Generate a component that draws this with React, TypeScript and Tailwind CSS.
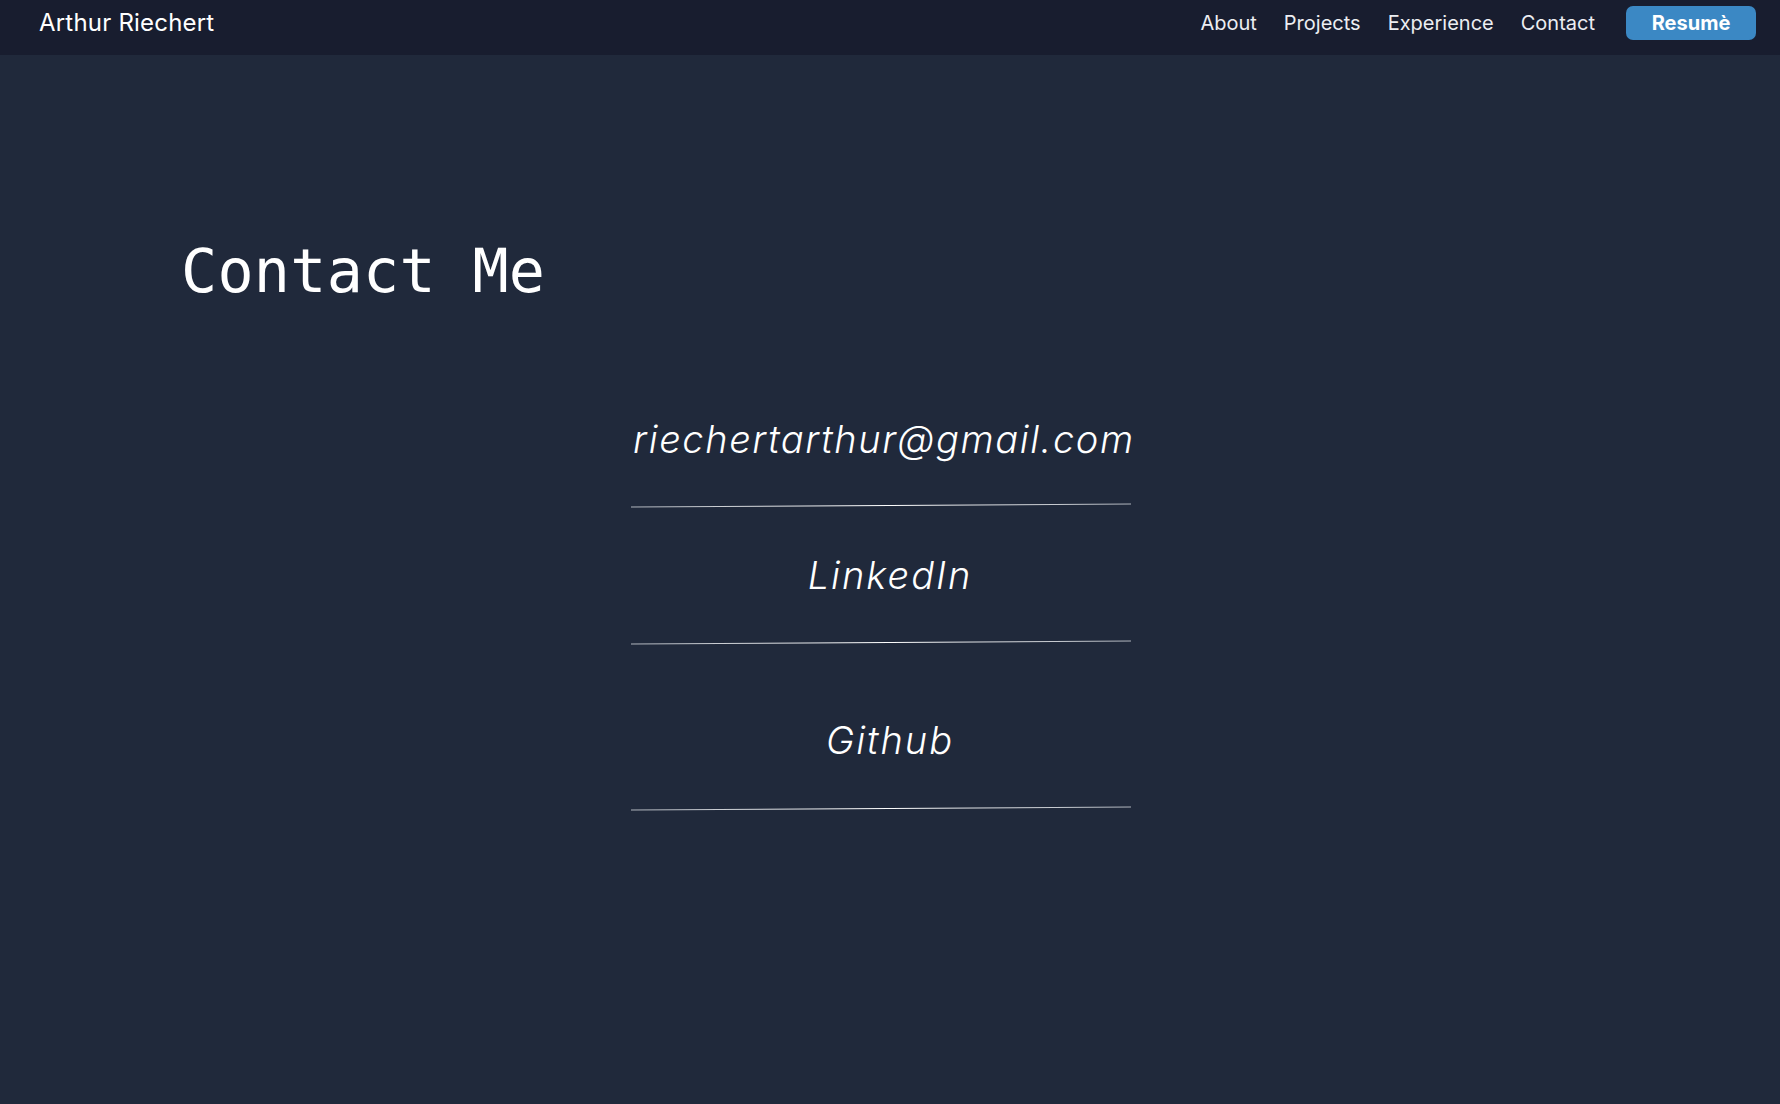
const navLinks = ["About", "Projects", "Experience", "Contact"];

const contacts = [
  { label: "riechertarthur@gmail.com", gap: "mt-0", line: "mt-[47px]", text: "pl-[2px] text-left tracking-[1.6px]" },
  { label: "LinkedIn", gap: "mt-[50px]", line: "mt-[48px]", text: "text-center tracking-[2px]" },
  { label: "Github", gap: "mt-[78px]", line: "mt-[49px]", text: "text-center tracking-[2px]" },
];

export default function App() {
  return (
    <div className="min-h-screen bg-[#20293b] font-['Inter',sans-serif] text-white">
      <header className="flex h-[55px] items-start justify-between bg-[#181d2f] pl-[39px] pr-[24px] pt-[6px]">
        <a href="#" className="flex h-[34px] items-center text-[24px] font-normal leading-none tracking-[0.2px]">
          Arthur Riechert
        </a>
        <nav className="flex h-[34px] items-center gap-[27px]">
          {navLinks.map((link) => (
            <a key={link} href="#" className="text-[20px] font-normal leading-none text-[#eceef2]">
              {link}
            </a>
          ))}
          <a
            href="#"
            className="ml-[4px] flex h-[34px] w-[130px] items-center justify-center rounded-[7px] bg-[#3b88c4] text-[20px] font-bold leading-none"
          >
            Resumè
          </a>
        </nav>
      </header>

      <main className="pb-20">
        <h1 className="mt-[186px] pl-[181px] font-['DejaVu_Sans_Mono',monospace] text-[60px] font-normal leading-none tracking-[0.3px]">
          Contact Me
        </h1>

        <div className="mx-auto mt-[119px] w-[518px]">
          {contacts.map((c) => (
            <div key={c.label} className={c.gap}>
              <a href="#" className={`block text-[38px] font-light italic leading-none ${c.text}`}>
                {c.label}
              </a>
              <div className={`${c.line} h-px w-[500px] -rotate-[0.35deg] bg-gradient-to-r from-[#aeb3bb] via-white to-[#aeb3bb]`} />
            </div>
          ))}
        </div>
      </main>
    </div>
  );
}
